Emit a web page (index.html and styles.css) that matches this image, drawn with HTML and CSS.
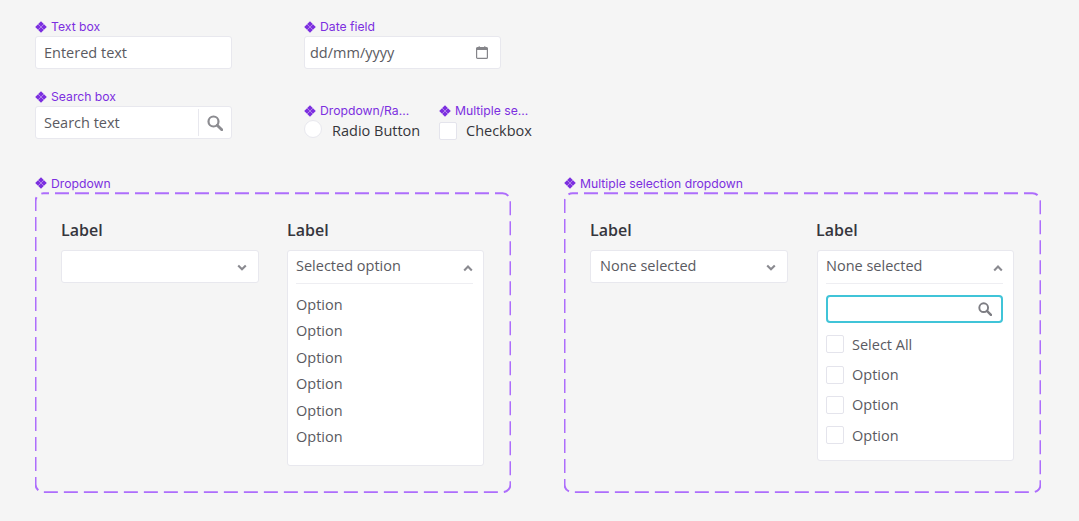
FILE: index.html
```html
<!DOCTYPE html>
<html lang="en">
<head>
<meta charset="utf-8">
<title>Form components</title>
<link rel="stylesheet" href="styles.css">
</head>
<body>
<svg class="defs" width="0" height="0" aria-hidden="true">
  <symbol id="diamond" viewBox="0 0 12 12"><path d="M6 .2 8.8 3 6 5.8 3.2 3ZM3 3.2 5.8 6 3 8.8.2 6ZM9 3.2 11.8 6 9 8.8 6.2 6ZM6 6.2 8.8 9 6 11.8 3.2 9Z" fill="#7c2fe0"/></symbol>
  <symbol id="chev-down" viewBox="0 0 10 7"><path d="M1.2 1.4 5 5.2 8.8 1.4" fill="none" stroke="#8a8a90" stroke-width="2.1"/></symbol>
  <symbol id="chev-up" viewBox="0 0 10 7"><path d="M1.2 5.4 5 1.6 8.8 5.4" fill="none" stroke="#8a8a90" stroke-width="2.1"/></symbol>
  <symbol id="search" viewBox="0 0 16 16"><circle cx="6.5" cy="6.5" r="5" fill="none" stroke="currentColor" stroke-width="2.2"/><path d="M10.2 10.2 14.8 14.8" stroke="currentColor" stroke-width="2.8" stroke-linecap="round"/></symbol>
</svg>

<main class="page">
  <section class="top">
    <div class="col">
      <div class="comp">
        <div class="tag"><svg class="dia"><use href="#diamond"/></svg>Text box</div>
        <div class="box"><span class="val">Entered text</span></div>
      </div>
      <div class="comp">
        <div class="tag"><svg class="dia"><use href="#diamond"/></svg>Search box</div>
        <div class="box"><span class="val grow">Search text</span><span class="search-btn"><svg class="ico-search"><use href="#search"/></svg></span></div>
      </div>
    </div>
    <div class="col">
      <div class="comp">
        <div class="tag"><svg class="dia"><use href="#diamond"/></svg>Date field</div>
        <div class="box date"><span class="val grow">dd/mm/yyyy</span>
          <svg class="ico-cal" viewBox="0 0 12 13"><rect x=".6" y="1.6" width="10.8" height="10.8" rx="1" fill="none" stroke="#85858a" stroke-width="1.2"/><rect x=".6" y="1.6" width="10.8" height="2.4" fill="#85858a"/><path d="M3.2 .2V2M8.8 .2V2" stroke="#85858a" stroke-width="1.2"/></svg>
        </div>
      </div>
      <div class="choices">
        <div class="choice radio-wrap">
          <div class="tag tight"><svg class="dia"><use href="#diamond"/></svg>Dropdown/Ra...</div>
          <div class="choice-row"><span class="radio"></span><span class="choice-text">Radio Button</span></div>
        </div>
        <div class="choice">
          <div class="tag tight"><svg class="dia"><use href="#diamond"/></svg>Multiple se...</div>
          <div class="choice-row"><span class="check"></span><span class="choice-text">Checkbox</span></div>
        </div>
      </div>
    </div>
  </section>

  <section class="frames">
    <div class="frame-wrap">
      <div class="tag frame-tag"><svg class="dia"><use href="#diamond"/></svg>Dropdown</div>
      <div class="frame">
        <svg class="dash"><rect x=".5" y="1.3" rx="8" ry="8" class="dash-rect"/></svg>
        <div class="dd-col">
          <div class="label">Label</div>
          <div class="box dd"><span class="val grow"></span><svg class="chev"><use href="#chev-down"/></svg></div>
        </div>
        <div class="dd-col">
          <div class="label">Label</div>
          <div class="panel single">
            <div class="panel-head"><span class="val grow">Selected option</span><svg class="chev"><use href="#chev-up"/></svg></div>
            <ul class="options">
              <li>Option</li><li>Option</li><li>Option</li><li>Option</li><li>Option</li><li>Option</li>
            </ul>
          </div>
        </div>
      </div>
    </div>
    <div class="frame-wrap wide">
      <div class="tag frame-tag"><svg class="dia"><use href="#diamond"/></svg>Multiple selection dropdown</div>
      <div class="frame">
        <svg class="dash"><rect x=".5" y="1.3" rx="8" ry="8" class="dash-rect"/></svg>
        <div class="dd-col">
          <div class="label">Label</div>
          <div class="box dd"><span class="val grow">None selected</span><svg class="chev"><use href="#chev-down"/></svg></div>
        </div>
        <div class="dd-col">
          <div class="label">Label</div>
          <div class="panel multi">
            <div class="panel-head"><span class="val grow">None selected</span><svg class="chev"><use href="#chev-up"/></svg></div>
            <div class="filter"><svg class="ico-filter"><use href="#search"/></svg></div>
            <ul class="checks">
              <li><span class="check small"></span>Select All</li>
              <li><span class="check small"></span>Option</li>
              <li><span class="check small"></span>Option</li>
              <li><span class="check small"></span>Option</li>
            </ul>
          </div>
        </div>
      </div>
    </div>
  </section>
</main>
</body>
</html>
```
FILE: styles.css
```css
* { box-sizing: border-box; }
html, body { margin: 0; height: 100%; }
body { background: #f5f5f5; overflow: hidden; font-family: "Open Sans", "Noto Sans", sans-serif; color: #5a5a61; }
.defs { position: absolute; }
.page { padding: 17px 0 0 35px; }

.top { display: flex; gap: 72px; height: 157px; }
.col { width: 197px; flex: none; }
.comp { height: 70px; }
.tag { display: flex; align-items: center; height: 19px; font: 12.2px/19px Inter, sans-serif; color: #7c2fe0; white-space: nowrap; }
.dia { width: 12px; height: 12px; margin-right: 4px; flex: none; }

.box { display: flex; align-items: center; height: 33px; padding-left: 8px; background: #fff; border: 1px solid #e8e8ee; border-radius: 3px; font-size: 14.5px; }
.val { line-height: 20px; white-space: nowrap; }
.grow { flex: 1; }
.search-btn { display: flex; align-items: center; justify-content: center; width: 33px; height: 27px; border-left: 1px solid #e8e8ee; }
.ico-search { width: 16px; height: 16px; color: #8c8c91; }
.date { padding-left: 5px; padding-right: 12px; }
.ico-cal { width: 12px; height: 13px; }

.choices { display: flex; margin-top: 15px; width: 240px; }
.choice { flex: none; }
.radio-wrap { width: 135px; }
.tag.tight { height: 18px; line-height: 18px; }
.choice-row { display: flex; align-items: center; height: 20px; }
.choice-text { font-size: 14.5px; line-height: 18px; color: #35353b; white-space: nowrap; margin-top: 1px; }
.radio { align-self: flex-start; width: 18px; height: 18px; margin-right: 10px; border-radius: 50%; background: #fff; border: 1px solid #e8e8ee; flex: none; }
.check { display: block; width: 18px; height: 18px; margin-right: 9px; border-radius: 2px; background: #fff; border: 1px solid #e4e4ec; flex: none; }
.choice .check { align-self: flex-end; }

.frames { display: flex; gap: 53px; }
.frame-wrap { width: 476px; flex: none; }
.frame-wrap.wide { width: 477px; }
.frame-tag { height: 18px; }
.frame { position: relative; display: flex; gap: 28px; height: 300.5px; padding: 27px 0 0 26px; }
.dash { position: absolute; inset: 0; width: 100%; height: 100%; pointer-events: none; }
.dash-rect { width: calc(100% - 1px); height: calc(100% - 1.6px); fill: none; stroke: #ad6dfc; stroke-width: 2; stroke-dasharray: 14 6; stroke-dashoffset: -11.5; }

.dd-col { width: 198px; flex: none; }
.label { height: 20px; margin-top: 1px; margin-bottom: 10px; font: 600 16px/20px "Open Sans", sans-serif; color: #36363d; }
.box.dd { padding-left: 9px; padding-right: 11px; }
.dd .val { padding-bottom: 1px; }
.chev { width: 10px; height: 7px; flex: none; margin-top: 2px; }

.panel { width: 197px; background: #fff; border: 1px solid #e8e8ee; border-radius: 3px; padding: 0 10px 0 8px; }
.single { height: 216px; }
.multi { height: 211px; margin-left: 1px; }
.panel-head { display: flex; align-items: center; height: 33px; border-bottom: 1px solid #eeeef2; font-size: 14.5px; }
.panel-head .val { padding-bottom: 3px; }
.options { list-style: none; margin: 8px 0 0; padding: 0; font-size: 14.5px; }
.options li { height: 26.4px; line-height: 26px; }
.filter { display: flex; align-items: center; justify-content: flex-end; height: 28px; margin-top: 11px; padding-right: 9px; background: #fff; border: 2px solid #40c4d8; border-radius: 4px; }
.ico-filter { width: 14px; height: 14px; color: #7d7d83; }
.checks { list-style: none; margin: 6px 0 0; padding: 0; font-size: 14.5px; }
.checks li { display: flex; align-items: center; height: 30.4px; }
.check.small { margin-right: 8px; }
```
